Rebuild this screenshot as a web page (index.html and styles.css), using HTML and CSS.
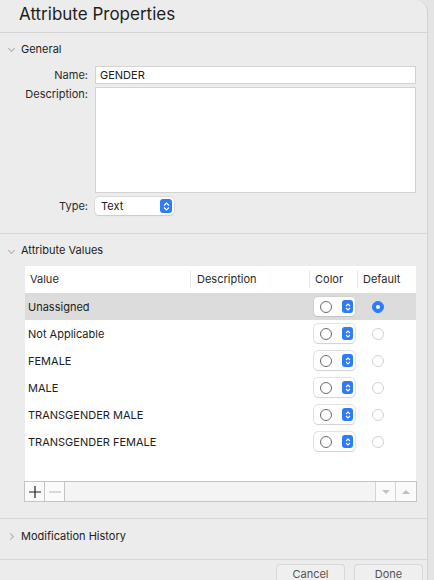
FILE: index.html
```html
<!DOCTYPE html>
<html>
<head>
<meta charset="utf-8">
<link rel="stylesheet" href="styles.css">
</head>
<body>
<div class="window">
  <div class="titlebar">Attribute Properties</div>

  <div class="section">
    <div class="sec-head"><span class="chev down"></span>General</div>
    <div class="form">
      <div class="lbl l-name">Name:</div>
      <div class="field name-field">GENDER</div>
      <div class="lbl l-desc">Description:</div>
      <div class="field desc-field"></div>
      <div class="lbl l-type">Type:</div>
      <div class="popup-row">
        <div class="popup">
          <span>Text</span>
          <span class="stepper"><svg width="7" height="9" viewBox="0 0 7 9"><path d="M1 3.5 L3.5 1 L6 3.5 M1 5.5 L3.5 8 L6 5.5" fill="none" stroke="#fff" stroke-width="1.2"/></svg></span>
        </div>
      </div>
    </div>
  </div>

  <div class="section values">
    <div class="sec-head"><span class="chev down"></span>Attribute Values</div>
    <div class="table-wrap">
      <div class="table">
        <div class="thead">
          <div class="th c-val">Value</div>
          <div class="th c-desc">Description</div>
          <div class="th c-col">Color</div>
          <div class="th c-def last">Default</div>
        </div>
        <div class="tr sel">
          <div class="td c-val">Unassigned</div><div class="td c-desc"></div>
          <div class="td c-col"><div class="cpop"><span class="ring"></span><span class="stepper sm"><svg width="6" height="8" viewBox="0 0 6 8"><path d="M1 3 L3 1 L5 3 M1 5 L3 7 L5 5" fill="none" stroke="#fff" stroke-width="1.1"/></svg></span></div></div>
          <div class="td c-def"><span class="radio on"></span></div>
        </div>
        <div class="tr">
          <div class="td c-val">Not Applicable</div><div class="td c-desc"></div>
          <div class="td c-col"><div class="cpop"><span class="ring"></span><span class="stepper sm"><svg width="6" height="8" viewBox="0 0 6 8"><path d="M1 3 L3 1 L5 3 M1 5 L3 7 L5 5" fill="none" stroke="#fff" stroke-width="1.1"/></svg></span></div></div>
          <div class="td c-def"><span class="radio"></span></div>
        </div>
        <div class="tr">
          <div class="td c-val">FEMALE</div><div class="td c-desc"></div>
          <div class="td c-col"><div class="cpop"><span class="ring"></span><span class="stepper sm"><svg width="6" height="8" viewBox="0 0 6 8"><path d="M1 3 L3 1 L5 3 M1 5 L3 7 L5 5" fill="none" stroke="#fff" stroke-width="1.1"/></svg></span></div></div>
          <div class="td c-def"><span class="radio"></span></div>
        </div>
        <div class="tr">
          <div class="td c-val">MALE</div><div class="td c-desc"></div>
          <div class="td c-col"><div class="cpop"><span class="ring"></span><span class="stepper sm"><svg width="6" height="8" viewBox="0 0 6 8"><path d="M1 3 L3 1 L5 3 M1 5 L3 7 L5 5" fill="none" stroke="#fff" stroke-width="1.1"/></svg></span></div></div>
          <div class="td c-def"><span class="radio"></span></div>
        </div>
        <div class="tr">
          <div class="td c-val">TRANSGENDER MALE</div><div class="td c-desc"></div>
          <div class="td c-col"><div class="cpop"><span class="ring"></span><span class="stepper sm"><svg width="6" height="8" viewBox="0 0 6 8"><path d="M1 3 L3 1 L5 3 M1 5 L3 7 L5 5" fill="none" stroke="#fff" stroke-width="1.1"/></svg></span></div></div>
          <div class="td c-def"><span class="radio"></span></div>
        </div>
        <div class="tr">
          <div class="td c-val">TRANSGENDER FEMALE</div><div class="td c-desc"></div>
          <div class="td c-col"><div class="cpop"><span class="ring"></span><span class="stepper sm"><svg width="6" height="8" viewBox="0 0 6 8"><path d="M1 3 L3 1 L5 3 M1 5 L3 7 L5 5" fill="none" stroke="#fff" stroke-width="1.1"/></svg></span></div></div>
          <div class="td c-def"><span class="radio"></span></div>
        </div>
      </div>
      <div class="tbar">
        <div class="tb-btn"><svg width="14" height="14" viewBox="0 0 14 14"><path d="M7 1 V13 M1 7 H13" stroke="#222" stroke-width="1.2"/></svg></div>
        <div class="tb-btn"><svg width="14" height="14" viewBox="0 0 14 14"><path d="M1 7 H13" stroke="#c4c4c4" stroke-width="1.2"/></svg></div>
        <div class="tb-fill"></div>
        <div class="tb-btn arrow"><svg width="10" height="6" viewBox="0 0 10 6"><path d="M1 1 H9 L5 5 Z" fill="#c2c2c2"/></svg></div>
        <div class="tb-btn arrow"><svg width="10" height="6" viewBox="0 0 10 6"><path d="M1 5 H9 L5 1 Z" fill="#bdbdbd"/></svg></div>
      </div>
    </div>
  </div>

  <div class="section mod">
    <div class="sec-head"><span class="chev right"></span>Modification History</div>
  </div>

  <div class="footer">
    <div class="btn">Cancel</div>
    <div class="btn">Done</div>
  </div>
</div>
</body>
</html>
```

FILE: styles.css
```css
* { box-sizing: border-box; }
html, body { margin: 0; padding: 0; }
body {
  width: 434px;
  height: 580px;
  overflow: hidden;
  background: #e4e4e4;
  font-family: "Inter", "Liberation Sans", sans-serif;
  color: #222;
  font-size: 11px;
}
.window {
  width: 428px;
  height: 580px;
  background: #ececec;
  border-right: 1px solid #d2d2d2;
  border-top-right-radius: 12px;
  overflow: hidden;
}
.titlebar {
  height: 33px;
  padding: 3px 0 0 19px;
  font-size: 17px;
  line-height: 22px;
  color: #1e1e1e;
  border-bottom: 1px solid #d4d4d4;
}
.section {
  border-bottom: 1px solid #d6d6d6;
}
.sec-head {
  display: flex;
  align-items: center;
  height: 31px;
  padding-left: 8px;
  font-size: 11px;
  color: #222;
}
.chev {
  width: 7px;
  height: 7px;
  margin-right: 6px;
  position: relative;
}
.chev.down::before {
  content: "";
  display: block;
  width: 4px;
  height: 4px;
  border-right: 1px solid #b0b0b0;
  border-bottom: 1px solid #b0b0b0;
  transform: translate(1px, 1px) rotate(45deg);
}
.chev.right::before {
  content: "";
  display: block;
  width: 4px;
  height: 4px;
  border-right: 1px solid #b0b0b0;
  border-bottom: 1px solid #b0b0b0;
  transform: translate(0, 1px) rotate(-45deg);
}
.form {
  display: grid;
  grid-template-columns: 88px 1fr;
  column-gap: 7px;
  row-gap: 3px;
  padding: 2px 11px 18px 0;
}
.lbl {
  text-align: right;
  font-size: 11px;
  color: #2a2a2a;
}
.l-name { line-height: 18px; }
.l-desc { line-height: 14px; }
.l-type { line-height: 18px; margin-top: 1px; }
.field {
  background: #fff;
  border: 1px solid #d2d2d2;
  font-size: 11px;
  padding: 0 0 0 4px;
}
.name-field { height: 18px; line-height: 16px; }
.desc-field { height: 106px; }
.popup-row { display: flex; margin-top: 1px; }
.popup {
  width: 79px;
  height: 18px;
  background: #fff;
  border-radius: 4px;
  box-shadow: 0 0 0 0.5px #c8c8c8, 0 1px 1px rgba(0,0,0,0.12);
  display: flex;
  align-items: center;
  justify-content: space-between;
  padding: 0 2px 0 6px;
  font-size: 11px;
}
.stepper {
  width: 12px;
  height: 14px;
  background: #2d7cf6;
  border-radius: 3px;
  display: flex;
  align-items: center;
  justify-content: center;
}
.stepper.sm { width: 11px; height: 13px; }
.values .sec-head { height: 32px; }
.table-wrap {
  padding: 0 11px 16px 24px;
}
.table {
  background: #fff;
  height: 215px;
  margin-left: 1px;
  width: 391px;
}
.thead, .tr {
  display: flex;
  height: 27px;
  align-items: center;
}
.th {
  height: 17px;
  line-height: 17px;
  border-right: 1px solid #e4e4e4;
  padding-left: 5px;
  font-size: 11px;
  color: #2a2a2a;
}
.th.last { border-right: none; }
.c-val { width: 166px; }
.c-desc { width: 119px; }
.c-col { width: 48px; }
.c-def { width: 58px; }
.th.c-desc { padding-left: 6px; }
.tr.sel { background: #dcdcdc; }
.td { font-size: 11px; color: #222; }
.td.c-val { padding-left: 3px; }
.td.c-col { padding-left: 4px; display: flex; }
.td.c-def { padding-left: 14px; display: flex; }
.cpop {
  width: 41px;
  height: 19px;
  background: #fff;
  border-radius: 4px;
  box-shadow: 0 0 0 0.5px #c6c6c6, 0 1px 1px rgba(0,0,0,0.12);
  display: flex;
  align-items: center;
  padding: 0 2px 0 6px;
  justify-content: space-between;
}
.ring {
  width: 12px;
  height: 12px;
  border: 1px solid #6a6a6a;
  border-radius: 50%;
}
.radio {
  width: 12px;
  height: 12px;
  border-radius: 50%;
  border: 1px solid #d2d2d2;
  background: #fff;
  display: flex;
  align-items: center;
  justify-content: center;
}
.radio.on {
  background: #2d7cf6;
  border-color: #2d7cf6;
}
.radio.on::after {
  content: "";
  width: 4px;
  height: 4px;
  border-radius: 50%;
  background: #fff;
}
.tbar {
  display: flex;
  height: 21px;
  border: 1px solid #c4c4c4;
  background: #f4f4f4;
  width: 393px;
}
.tb-btn {
  width: 20px;
  height: 19px;
  border-right: 1px solid #c4c4c4;
  display: flex;
  align-items: center;
  justify-content: center;
  background: #fafafa;
}
.tb-fill { flex: 1; border-right: 1px solid #d4d4d4; }
.tb-btn.arrow { border-right: 1px solid #d4d4d4; }
.tb-btn.arrow:last-child { border-right: none; }
.mod .sec-head { height: 34px; }
.mod { padding-bottom: 6px; }
.footer {
  display: flex;
  justify-content: flex-end;
  gap: 9px;
  padding: 4px 4px 0 0;
}
.btn {
  width: 69px;
  height: 18px;
  background: #efefef;
  border: 1px solid #d8d8d8;
  border-bottom: none;
  border-radius: 4px 4px 0 0;
  text-align: center;
  line-height: 18px;
  font-size: 11px;
  color: #555;
}
```
